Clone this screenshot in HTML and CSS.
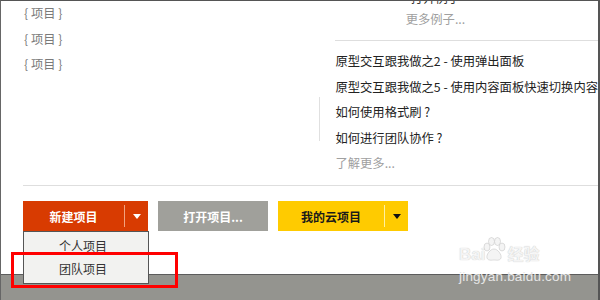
FILE: index.html
```html
<!DOCTYPE html>
<html lang="zh-CN">
<head>
    <meta charset="UTF-8">
    <title>开始</title>
    <link rel="stylesheet" href="styles.css">
</head>
<body>
    <div class="window">
        <div class="main">
            <!-- obere Hälfte: letzte Projekte und Beispiele -->
            <div class="top">
                <div class="recent">
                    <div class="recent-item">{ 项目 }</div>
                    <div class="recent-item">{ 项目 }</div>
                    <div class="recent-item">{ 项目 }</div>
                </div>
                <div class="learn">
                    <div class="examples">
                        <div class="examples-line">打开例子</div>
                        <div class="examples-line more">更多例子...</div>
                    </div>
                    <div class="tutorials">
                        <div class="tutorial">原型交互跟我做之2 - 使用弹出面板</div>
                        <div class="tutorial">原型交互跟我做之5 - 使用内容面板快速切换内容</div>
                        <div class="tutorial">如何使用格式刷 ?</div>
                        <div class="tutorial">如何进行团队协作 ?</div>
                        <div class="tutorial more">了解更多...</div>
                    </div>
                </div>
                <div class="divider"></div>
            </div>
            <hr class="rule">

            <!-- Buttons -->
            <div class="actions">
                <div class="btn-wrap">
                    <div class="btn btn-red">
                        <span class="btn-label">新建项目</span>
                        <span class="btn-sep"></span>
                        <span class="btn-arrow"></span>
                    </div>
                    <div class="menu">
                        <div class="menu-item">个人项目</div>
                        <div class="menu-item">团队项目</div>
                    </div>
                </div>
                <div class="btn btn-gray">
                    <span class="btn-label">打开项目...</span>
                </div>
                <div class="btn btn-yellow">
                    <span class="btn-label">我的云项目</span>
                    <span class="btn-sep"></span>
                    <span class="btn-arrow"></span>
                </div>
            </div>
        </div>
        <div class="statusbar"></div>

        <!-- Markierung -->
        <div class="highlight"></div>

        <!-- Wasserzeichen -->
        <div class="watermark">
            <div class="wm-logo">
                <span>Bai</span>
                <svg class="paw" width="26" height="26" viewBox="0 0 26 26">
                    <ellipse cx="6" cy="10" rx="3" ry="4"/>
                    <ellipse cx="10.5" cy="4.5" rx="3" ry="4"/>
                    <ellipse cx="16.5" cy="4.5" rx="3" ry="4"/>
                    <ellipse cx="21" cy="10" rx="3" ry="4"/>
                    <path d="M13 12 C9 12 5 18 6 21 C7 24 11 23 13 23 C15 23 19 24 20 21 C21 18 17 12 13 12 Z"/>
                </svg>
                <span>经验</span>
            </div>
            <div class="wm-url">jingyan.baidu.com</div>
        </div>
    </div>
</body>
</html>
```

FILE: styles.css
```css
/* Seite */
body {
    margin: 0;
    font-family: "Noto Sans CJK SC", "Liberation Sans", sans-serif;
    font-size: 12.3px;
    background-color: white;
}

.window {
    position: relative;
    width: 600px;
    height: 300px;
    box-sizing: border-box;
    border-top: 1px solid #555;
    border-left: 1px solid #666;
    border-right: 2px solid #555;
    overflow: hidden;
    display: flex;
    flex-direction: column;
}

.main {
    height: 273px;
    background-color: white;
}

/* obere Hälfte */
.top {
    position: relative;
    display: flex;
    height: 184px;
}

.recent {
    width: 296px;
    padding-left: 23px;
    color: #7a7a7a;
    line-height: 25.5px;
}

.learn {
    flex: 1;
    padding-left: 19px;
}

.divider {
    position: absolute;
    left: 318px;
    top: 96px;
    width: 1px;
    height: 44px;
    background-color: #e0e0e0;
}

.examples {
    margin-top: -13px;
    height: 53px;
    box-sizing: border-box;
    border-bottom: 1px solid #dedede;
}

.examples-line {
    width: 200px;
    text-align: center;
    line-height: 21px;
    color: #333;
}

.more {
    color: #a0a0a0;
}

.tutorials {
    padding-top: 8px;
    line-height: 25.5px;
    color: #222;
    white-space: nowrap;
}

.rule {
    margin: 0 0 0 22px;
    border: none;
    border-top: 1px solid #dedede;
    height: 0;
}

/* Buttons */
.actions {
    display: flex;
    gap: 10px;
    margin-top: 15px;
    padding-left: 22px;
}

.btn-wrap {
    position: relative;
}

.btn {
    display: flex;
    align-items: center;
    height: 30px;
    font-weight: bold;
    font-size: 12px;
}

.btn-label {
    flex: 1;
    text-align: center;
}

.btn-sep {
    width: 1px;
    height: 22px;
}

.btn-arrow {
    width: 23px;
    height: 30px;
    position: relative;
}

.btn-arrow::after {
    content: "";
    position: absolute;
    left: 8px;
    top: 13px;
    border-left: 4px solid transparent;
    border-right: 4px solid transparent;
    border-top: 5px solid white;
}

.btn-red {
    width: 125px;
    background-color: #d83b01;
    color: white;
}

.btn-red .btn-sep {
    background-color: #f2a27f;
}

.btn-gray {
    width: 110px;
    background-color: #a0a09b;
    color: white;
}

.btn-yellow {
    width: 130px;
    background-color: #ffcb00;
    color: #1a1a1a;
}

.btn-yellow .btn-sep {
    background-color: #fff0a0;
}

.btn-yellow .btn-arrow::after {
    border-top-color: #111;
}

/* Dropdown */
.menu {
    position: absolute;
    left: 0;
    top: 30px;
    width: 126px;
    box-sizing: border-box;
    padding: 2px 0 3px;
    background-color: #f2f2f0;
    border: 1px solid #555;
    z-index: 5;
}

.menu-item {
    line-height: 23px;
    text-align: center;
    padding-right: 6px;
    color: #333;
    font-size: 12px;
}

/* Statusleiste */
.statusbar {
    flex: 1;
    background-color: #94948f;
    border-top: 1px solid #5c5c5c;
}

/* rote Markierung */
.highlight {
    position: absolute;
    left: 10px;
    top: 251px;
    width: 167px;
    height: 36px;
    box-sizing: border-box;
    border: 3px solid #ff0000;
    z-index: 6;
}

/* Wasserzeichen */
.watermark {
    position: absolute;
    left: 458px;
    top: 236px;
    width: 112px;
}

.wm-logo {
    display: flex;
    align-items: flex-end;
    font-family: "Liberation Sans", "Noto Sans CJK SC", sans-serif;
    font-size: 17px;
    font-weight: bold;
    color: #f4f4f4;
    text-shadow: 0 0 1px #bbb;
    height: 28px;
    line-height: 20px;
}

.paw {
    fill: #f4f4f4;
    stroke: #c8c8c8;
    stroke-width: 0.6;
    margin: 0 -2px 2px -4px;
}

.wm-logo span:last-child {
    font-size: 16px;
    margin-left: 2px;
}

.wm-url {
    font-family: "Liberation Sans", sans-serif;
    font-size: 13.5px;
    color: #e6e6e6;
    margin-top: 4px;
    letter-spacing: 0.2px;
}
```
